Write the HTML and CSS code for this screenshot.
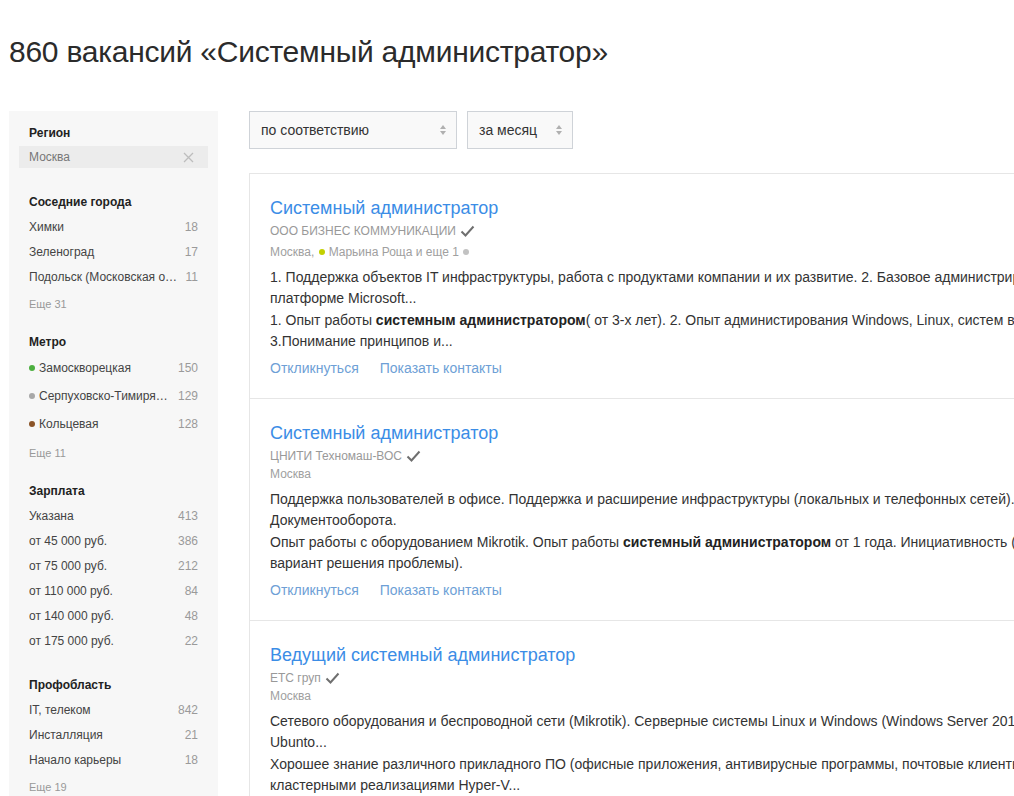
FILE: index.html
```html
<!DOCTYPE html>
<html lang="ru">
<head>
<meta charset="utf-8">
<title>860 вакансий «Системный администратор»</title>
<link rel="stylesheet" href="styles.css">
</head>
<body>
<div class="page">
  <h1 class="page-title">860 вакансий «Системный администратор»</h1>
  <div class="layout">
    <aside class="sidebar">
      <section class="filter filter-region">
        <div class="filter-title">Регион</div>
        <div class="chip"><span>Москва</span>
          <svg class="chip-x" width="11" height="11" viewBox="0 0 11 11"><path d="M1 1L10 10M10 1L1 10" stroke="#bdbdbd" stroke-width="1.3" fill="none"/></svg>
        </div>
      </section>
      <section class="filter">
        <div class="filter-title">Соседние города</div>
        <div class="row"><span class="name">Химки</span><span class="count">18</span></div>
        <div class="row"><span class="name">Зеленоград</span><span class="count">17</span></div>
        <div class="row"><span class="name">Подольск (Московская область)</span><span class="count">11</span></div>
        <div class="more">Еще 31</div>
      </section>
      <section class="filter">
        <div class="filter-title">Метро</div>
        <div class="row row-metro"><span class="name"><i class="dot dot-green"></i>Замоскворецкая</span><span class="count">150</span></div>
        <div class="row row-metro"><span class="name"><i class="dot dot-gray"></i>Серпуховско-Тимирязевская</span><span class="count">129</span></div>
        <div class="row row-metro"><span class="name"><i class="dot dot-brown"></i>Кольцевая</span><span class="count">128</span></div>
        <div class="more">Еще 11</div>
      </section>
      <section class="filter filter-nomore">
        <div class="filter-title">Зарплата</div>
        <div class="row"><span class="name">Указана</span><span class="count">413</span></div>
        <div class="row"><span class="name">от 45 000 руб.</span><span class="count">386</span></div>
        <div class="row"><span class="name">от 75 000 руб.</span><span class="count">212</span></div>
        <div class="row"><span class="name">от 110 000 руб.</span><span class="count">84</span></div>
        <div class="row"><span class="name">от 140 000 руб.</span><span class="count">48</span></div>
        <div class="row"><span class="name">от 175 000 руб.</span><span class="count">22</span></div>
      </section>
      <section class="filter">
        <div class="filter-title">Профобласть</div>
        <div class="row"><span class="name">IT, телеком</span><span class="count">842</span></div>
        <div class="row"><span class="name">Инсталляция</span><span class="count">21</span></div>
        <div class="row"><span class="name">Начало карьеры</span><span class="count">18</span></div>
        <div class="more">Еще 19</div>
      </section>
    </aside>
    <main class="main">
      <div class="sorts">
        <div class="select select-wide">по соответствию<span class="arrows"><i class="up"></i><i class="down"></i></span></div>
        <div class="select select-narrow">за месяц<span class="arrows"><i class="up"></i><i class="down"></i></span></div>
      </div>
      <div class="results">
        <article class="vacancy">
          <a class="v-title">Системный администратор</a>
          <div class="v-company">ООО БИЗНЕС КОММУНИКАЦИИ <svg class="check" width="15" height="12" viewBox="0 0 15 12"><path d="M1.5 6.5L5.5 10.5L13.5 1.5" stroke="#6f6f6f" stroke-width="2" fill="none"/></svg></div>
          <div class="v-location v-location-metro">Москва, <i class="dot dot-lime"></i>Марьина Роща и еще 1 <i class="dot dot-light"></i></div>
          <p class="v-text">1. Поддержка объектов IT инфраструктуры, работа с продуктами компании и их развитие. 2. Базовое администрирование серверов и рабочих станций на<br>платформе Microsoft...</p>
          <p class="v-text">1. Опыт работы <b>системным администратором</b>( от 3-х лет). 2. Опыт администирования Windows, Linux, систем виртуализации.<br>3.Понимание принципов и...</p>
          <div class="v-actions"><a class="v-link">Откликнуться</a><a class="v-link">Показать контакты</a></div>
        </article>
        <article class="vacancy">
          <a class="v-title">Системный администратор</a>
          <div class="v-company">ЦНИТИ Техномаш-ВОС <svg class="check" width="15" height="12" viewBox="0 0 15 12"><path d="M1.5 6.5L5.5 10.5L13.5 1.5" stroke="#6f6f6f" stroke-width="2" fill="none"/></svg></div>
          <div class="v-location">Москва</div>
          <p class="v-text">Поддержка пользователей в офисе. Поддержка и расширение инфраструктуры (локальных и телефонных сетей). Система<br>Документооборота.</p>
          <p class="v-text">Опыт работы с оборудованием Mikrotik. Опыт работы <b>системный администратором</b> от 1 года. Инициативность (поиск<br>вариант решения проблемы).</p>
          <div class="v-actions"><a class="v-link">Откликнуться</a><a class="v-link">Показать контакты</a></div>
        </article>
        <article class="vacancy">
          <a class="v-title">Ведущий системный администратор</a>
          <div class="v-company">ЕТС груп <svg class="check" width="15" height="12" viewBox="0 0 15 12"><path d="M1.5 6.5L5.5 10.5L13.5 1.5" stroke="#6f6f6f" stroke-width="2" fill="none"/></svg></div>
          <div class="v-location">Москва</div>
          <p class="v-text">Сетевого оборудования и беспроводной сети (Mikrotik). Серверные системы Linux и Windows (Windows Server 2012, Debian,<br>Ubunto...</p>
          <p class="v-text">Хорошее знание различного прикладного ПО (офисные приложения, антивирусные программы, почтовые клиенты). Работа с<br>кластерными реализациями Hyper-V...</p>
          <div class="v-actions"><a class="v-link">Откликнуться</a><a class="v-link">Показать контакты</a></div>
        </article>
      </div>
    </main>
  </div>
</div>
</body>
</html>
```

FILE: styles.css
```css
html { background: #fff; }
body {
  margin: 0;
  overflow: hidden;
  font-family: "Liberation Sans", Arial, sans-serif;
  color: #333;
}
.page {
  padding: 0 9px;
  width: 1300px;
}
.page-title {
  margin: 34px 0 0;
  font-size: 30px;
  line-height: 36px;
  font-weight: normal;
  color: #2b2b2b;
  letter-spacing: -0.25px;
}
.layout {
  display: grid;
  grid-template-columns: 209px 1000px;
  column-gap: 31px;
  margin-top: 41px;
  align-items: start;
}

/* sidebar */
.sidebar {
  background: #f7f7f7;
  padding: 14px 20px 40px;
  min-height: 760px;
}
.filter { margin-bottom: 22px; }
.filter-region { margin-bottom: 26px; }
.filter-nomore { margin-bottom: 24px; }
.filter-title {
  font-size: 12px;
  line-height: 16px;
  font-weight: bold;
  color: #222;
  margin-bottom: 4px;
}
.filter-region .filter-title { margin-bottom: 5px; }
.chip {
  display: flex;
  align-items: center;
  justify-content: space-between;
  margin: 0 -10px;
  padding: 0 10px;
  height: 22px;
  background: #ececec;
  font-size: 12px;
  color: #777;
}
.chip-x { margin-right: 4px; }
.row {
  display: flex;
  align-items: center;
  height: 25px;
  font-size: 12px;
  gap: 8px;
}
.row-metro { height: 28px; }
.name {
  flex: 1;
  min-width: 0;
  white-space: nowrap;
  overflow: hidden;
  text-overflow: ellipsis;
  color: #444;
}
.count {
  color: #9a9a9a;
  text-align: right;
}
.more {
  margin-top: 7px;
  font-size: 11px;
  line-height: 16px;
  color: #999;
}
.dot {
  display: inline-block;
  width: 6px;
  height: 6px;
  border-radius: 50%;
  margin-right: 4px;
  vertical-align: 1px;
}
.dot-green { background: #4caf3f; }
.dot-gray { background: #a8a8a8; }
.dot-brown { background: #8b5428; }
.dot-lime { background: #c3d000; }
.dot-light { background: #c2c2c2; margin-left: 1px; }

/* main */
.sorts {
  display: flex;
  gap: 10px;
}
.select {
  position: relative;
  box-sizing: border-box;
  height: 38px;
  border: 1px solid #cfd3d8;
  background: #f9f9f9;
  font-size: 14px;
  line-height: 36px;
  padding: 0 12px 0 11px;
  color: #333;
}
.select-wide { width: 208px; }
.select-narrow { width: 106px; }
.arrows {
  position: absolute;
  right: 10px;
  top: 13px;
  display: flex;
  flex-direction: column;
  gap: 2px;
}
.arrows i {
  display: block;
  width: 0;
  height: 0;
  border-left: 3.5px solid transparent;
  border-right: 3.5px solid transparent;
}
.arrows .up { border-bottom: 4px solid #b0b0b0; }
.arrows .down { border-top: 4px solid #b0b0b0; }

.results {
  margin-top: 24px;
  border-left: 1px solid #e6e6e6;
  border-top: 1px solid #e6e6e6;
}
.vacancy {
  padding: 22px 20px 20px;
  border-bottom: 1px solid #e6e6e6;
}
.v-title {
  display: block;
  font-size: 18px;
  line-height: 24px;
  color: #3b8de6;
}
.v-company {
  margin-top: 2px;
  font-size: 12px;
  line-height: 18px;
  color: #999;
  display: flex;
  align-items: center;
  gap: 4px;
}
.v-location {
  font-size: 12px;
  line-height: 18px;
  color: #a0a0a0;
}
.v-location-metro { margin-top: 2px; line-height: 20px; }
.v-location-metro .dot-lime { margin-left: 1px; }
.v-text {
  margin: 0;
  font-size: 14px;
  line-height: 21px;
  color: #333;
  white-space: nowrap;
}
.v-location + .v-text { margin-top: 6px; }
.v-location-metro + .v-text { margin-top: 5px; }
.v-text + .v-text { margin-top: 1px; }
.v-text b { color: #222; }
.v-actions {
  display: flex;
  gap: 21px;
  margin-top: 6px;
  font-size: 14px;
  line-height: 20px;
}
.v-link { color: #6e9fd6; }
```
